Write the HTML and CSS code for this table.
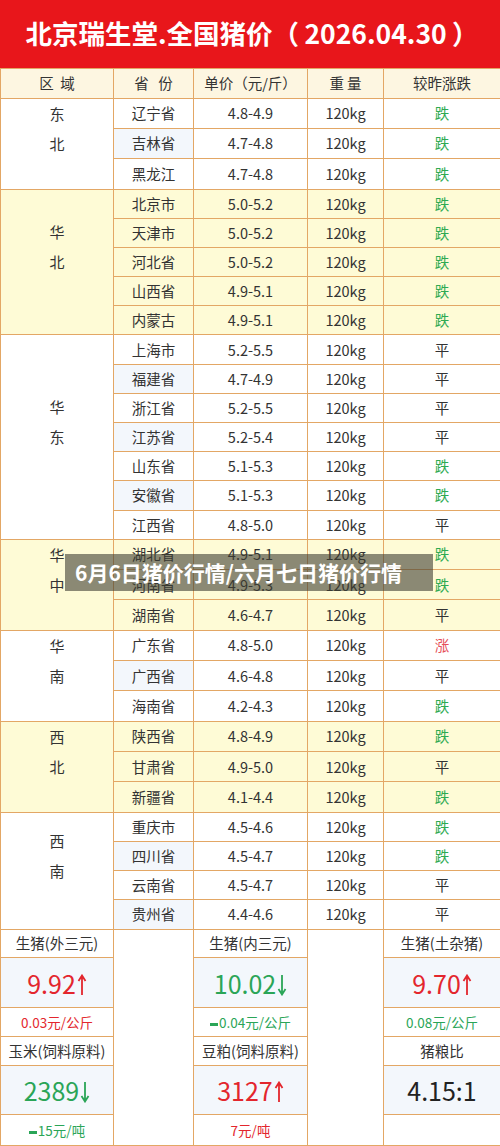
FILE: index.html
```html
<!DOCTYPE html>
<html lang="zh">
<head>
<meta charset="utf-8">
<link rel="stylesheet" href="styles.css">
</head>
<body>
<div class="page">
  <div class="title">北京瑞生堂.全国猪价（&thinsp;2026.04.30&thinsp;）</div>
  <table class="grid">
    <colgroup><col class="c1"><col class="c2"><col class="c3"><col class="c4"><col class="c5"></colgroup>
    <tr class="head"><td>区&nbsp;&nbsp;域</td><td>省&nbsp;&nbsp;&nbsp;份</td><td>单价（元/斤）</td><td>重&nbsp;量</td><td>较昨涨跌</td></tr>

    <tr><td class="region" rowspan="3">东<br>北</td><td>辽宁省</td><td>4.8-4.9</td><td>120kg</td><td class="down">跌</td></tr>
    <tr><td class="alt">吉林省</td><td>4.7-4.8</td><td>120kg</td><td class="down">跌</td></tr>
    <tr><td>黑龙江</td><td>4.7-4.8</td><td>120kg</td><td class="down">跌</td></tr>

    <tr class="y"><td class="region" rowspan="5">华<br>北</td><td>北京市</td><td>5.0-5.2</td><td>120kg</td><td class="down">跌</td></tr>
    <tr class="y"><td>天津市</td><td>5.0-5.2</td><td>120kg</td><td class="down">跌</td></tr>
    <tr class="y"><td>河北省</td><td>5.0-5.2</td><td>120kg</td><td class="down">跌</td></tr>
    <tr class="y"><td>山西省</td><td>4.9-5.1</td><td>120kg</td><td class="down">跌</td></tr>
    <tr class="y"><td>内蒙古</td><td>4.9-5.1</td><td>120kg</td><td class="down">跌</td></tr>

    <tr><td class="region" rowspan="7">华<br>东</td><td>上海市</td><td>5.2-5.5</td><td>120kg</td><td>平</td></tr>
    <tr><td class="alt">福建省</td><td>4.7-4.9</td><td>120kg</td><td>平</td></tr>
    <tr><td>浙江省</td><td>5.2-5.5</td><td>120kg</td><td>平</td></tr>
    <tr><td class="alt">江苏省</td><td>5.2-5.4</td><td>120kg</td><td>平</td></tr>
    <tr><td>山东省</td><td>5.1-5.3</td><td>120kg</td><td class="down">跌</td></tr>
    <tr><td class="alt">安徽省</td><td>5.1-5.3</td><td>120kg</td><td class="down">跌</td></tr>
    <tr><td>江西省</td><td>4.8-5.0</td><td>120kg</td><td>平</td></tr>

    <tr class="y"><td class="region" rowspan="3">华<br>中</td><td>湖北省</td><td>4.9-5.1</td><td>120kg</td><td class="down">跌</td></tr>
    <tr class="y"><td>河南省</td><td>4.9-5.3</td><td>120kg</td><td class="down">跌</td></tr>
    <tr class="y"><td>湖南省</td><td>4.6-4.7</td><td>120kg</td><td>平</td></tr>

    <tr><td class="region" rowspan="3">华<br>南</td><td>广东省</td><td>4.8-5.0</td><td>120kg</td><td class="up">涨</td></tr>
    <tr><td class="alt">广西省</td><td>4.6-4.8</td><td>120kg</td><td>平</td></tr>
    <tr><td>海南省</td><td>4.2-4.3</td><td>120kg</td><td class="down">跌</td></tr>

    <tr class="y"><td class="region" rowspan="3">西<br>北</td><td>陕西省</td><td>4.8-4.9</td><td>120kg</td><td class="down">跌</td></tr>
    <tr class="y"><td>甘肃省</td><td>4.9-5.0</td><td>120kg</td><td>平</td></tr>
    <tr class="y"><td>新疆省</td><td>4.1-4.4</td><td>120kg</td><td class="down">跌</td></tr>

    <tr><td class="region" rowspan="4">西<br>南</td><td>重庆市</td><td>4.5-4.6</td><td>120kg</td><td class="down">跌</td></tr>
    <tr><td class="alt">四川省</td><td>4.5-4.7</td><td>120kg</td><td class="down">跌</td></tr>
    <tr><td>云南省</td><td>4.5-4.7</td><td>120kg</td><td>平</td></tr>
    <tr><td class="alt">贵州省</td><td>4.4-4.6</td><td>120kg</td><td>平</td></tr>

    <tr class="bh"><td>生猪(外三元)</td><td class="blank" rowspan="6"></td><td>生猪(内三元)</td><td class="blank" rowspan="6"></td><td>生猪(土杂猪)</td></tr>
    <tr class="bv"><td class="red">9.92<svg class="arr" viewBox="0 0 10 22"><path d="M5 21V2M1.5 7L5 1.5 8.5 7"/></svg></td><td class="green">10.02<svg class="arr" viewBox="0 0 10 22"><path d="M5 1V20M1.5 15L5 20.5 8.5 15"/></svg></td><td class="red">9.70<svg class="arr" viewBox="0 0 10 22"><path d="M5 21V2M1.5 7L5 1.5 8.5 7"/></svg></td></tr>
    <tr class="bc"><td class="red">0.03元/公斤</td><td class="green"><span class="dash"></span>0.04元/公斤</td><td class="green">0.08元/公斤</td></tr>
    <tr class="bh"><td>玉米(饲料原料)</td><td>豆粕(饲料原料)</td><td>猪粮比</td></tr>
    <tr class="bv bv2"><td class="green">2389<svg class="arr" viewBox="0 0 10 22"><path d="M5 1V20M1.5 15L5 20.5 8.5 15"/></svg></td><td class="red">3127<svg class="arr" viewBox="0 0 10 22"><path d="M5 21V2M1.5 7L5 1.5 8.5 7"/></svg></td><td class="dark">4.15:1</td></tr>
    <tr class="bc bc2"><td class="green"><span class="dash"></span>15元/吨</td><td class="red">7元/吨</td><td></td></tr>
  </table>
  <div class="overlay">6月6日猪价行情/六月七日猪价行情</div>
</div>
</body>
</html>
```
FILE: styles.css
```css
html, body {
  margin: 0;
  padding: 0;
  background: #ffffff;
}
.page {
  position: relative;
  width: 500px;
  height: 1146px;
  overflow: hidden;
  font-family: "Noto Sans CJK SC", "Open Sans", sans-serif;
  color: #333333;
}
.title {
  height: 68px;
  background: #e8161b;
  color: #ffffff;
  font-weight: bold;
  font-size: 26.5px;
  line-height: 66px;
  text-align: center;
  white-space: nowrap;
  padding-left: 4px;
  box-sizing: border-box;
}
.grid {
  width: 500px;
  border-collapse: collapse;
  table-layout: fixed;
}
.c1 { width: 113px; }
.c2 { width: 80px; }
.c3 { width: 114px; }
.c4 { width: 76px; }
.c5 { width: 117px; }
.grid td {
  border: 1px solid #e3a765;
  height: 28.2px;
  padding: 0;
  text-align: center;
  vertical-align: middle;
  font-size: 14.5px;
  line-height: 20px;
  white-space: nowrap;
  background: #ffffff;
}
.grid tr.head td {
  background: #fdf6e1;
  height: 28.5px;
}
.grid tr.y td {
  background: #fefbd6;
}
.grid td.alt {
  background: #f3f7fc;
}
.grid td.region {
  line-height: 30px;
  padding-bottom: 30px;
  font-size: 15px;
}
.grid td.down { color: #2eaa52; }
.grid td.up { color: #e6505a; }
.grid td.blank { background: #ffffff; }
.grid tr.bh td { height: 27.8px; }
.grid tr.bv td {
  height: 48.8px;
  background: #f3f7fc;
  font-size: 25px;
  line-height: 30px;
}
.grid tr.bv2 td { height: 48px; }
.grid tr.bv td.blank { background: #ffffff; }
.grid tr.bc td {
  height: 28px;
  font-size: 13.5px;
}
.grid tr.bc2 td { height: 30px; }
.grid td.red { color: #e3262d; }
.grid td.green { color: #2aa557; }
.grid td.dark { color: #222222; }
.arr {
  width: 10px;
  height: 22px;
  margin-left: 1px;
  vertical-align: -2px;
  fill: none;
  stroke: currentColor;
  stroke-width: 1.8;
}
.dash {
  display: inline-block;
  width: 8px;
  height: 3px;
  background: currentColor;
  vertical-align: middle;
  margin-right: 1px;
}
.overlay {
  position: absolute;
  left: 65px;
  top: 554px;
  width: 358px;
  height: 37px;
  padding-left: 10px;
  background: rgba(62, 62, 50, 0.6);
  color: #ffffff;
  font-weight: bold;
  font-size: 21px;
  line-height: 37px;
  white-space: nowrap;
}
```
